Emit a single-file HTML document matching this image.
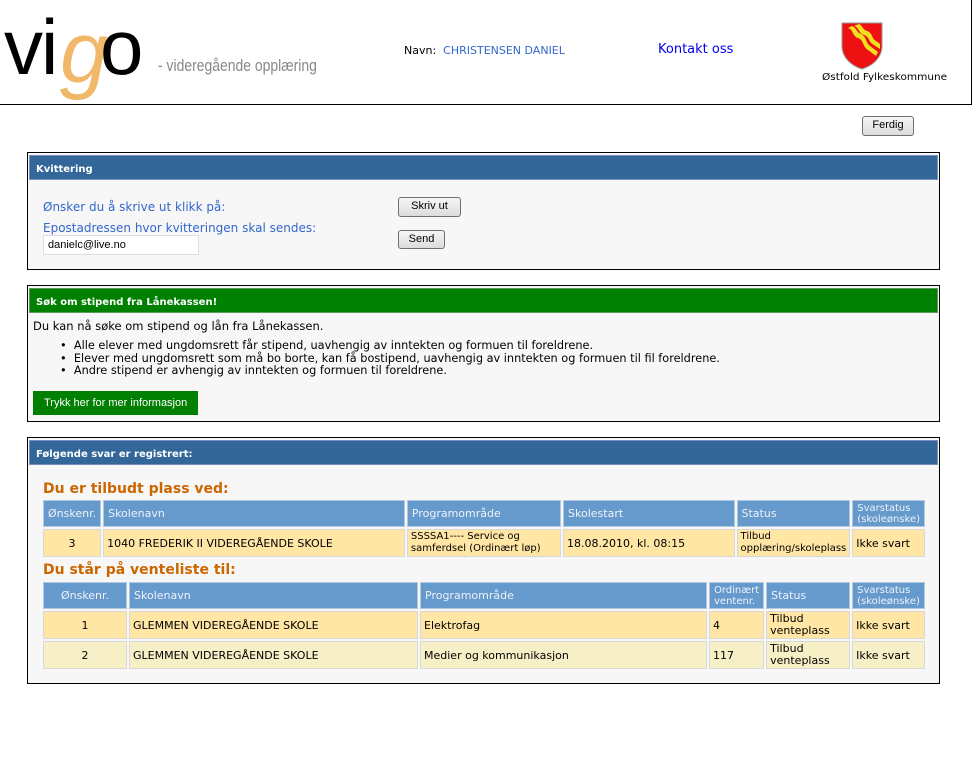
<!DOCTYPE html>
<html><head><meta charset="utf-8">
<style>
*{margin:0;padding:0;box-sizing:border-box}
body{width:978px;height:761px;background:#fff;position:relative;font-family:"DejaVu Sans",Verdana,sans-serif;font-size:11px;color:#000;overflow:hidden}
.a{position:absolute;white-space:nowrap}
.box{position:absolute;border:1px solid #000;background:#f7f7f7}
.bar{position:absolute;left:1px;right:1px;top:2px;height:25px;background:#336699;color:#fff;font-weight:bold;font-size:10px;padding:8px 0 0 6px;border:1px solid #7a8fbf}
.btn{position:absolute;border:1px solid #707070;border-radius:3px;background:linear-gradient(#f6f6f6,#dcdcdc);font-family:"Liberation Sans",Arial,sans-serif;font-size:11px;text-align:center;line-height:17px}
table{position:absolute;border-collapse:separate;border-spacing:2px;font-size:11px}
td{padding:0 3px;border:1px solid #d8d8d8}
th{background:#6699cc;color:#eef3fa;font-weight:normal;text-align:left;padding:0 4px;border:1px solid #b0c8e0}
.r1 td{background:#ffe6a5}
.r2 td{background:#f7efc6}
h3{position:absolute;color:#cc6600;font-size:14px;font-weight:bold}
.sm{font-size:10px;line-height:11px}
</style></head><body>
<div class="a" style="left:0;top:0;width:972px;height:105px;border:1px solid #000;border-top:none;border-left:none"></div>
<div class="a" style="left:4px;top:2px;font-family:'Liberation Sans',sans-serif;font-size:78px;color:#000;letter-spacing:-2px">vi</div>
<div class="a" style="left:60px;top:4px;font-family:'Liberation Sans',sans-serif;font-size:86px;color:#f0b868;font-style:italic">g</div>
<div class="a" style="left:100px;top:2px;font-family:'Liberation Sans',sans-serif;font-size:78px;color:#000">o</div>
<div class="a" style="left:158px;top:56px;font-family:'Liberation Sans',sans-serif;font-size:17px;color:#888;transform:scaleX(0.82);transform-origin:left">- videregående opplæring</div>
<div class="a" style="left:404px;top:44px;font-size:11px">Navn:&nbsp; <span style="color:#3366cc">CHRISTENSEN DANIEL</span></div>
<div class="a" style="left:658px;top:42px;font-size:13px;color:#0000ee">Kontakt oss</div>
<svg class="a" style="left:840px;top:22px" width="44" height="48" viewBox="0 0 44 48"><path d="M2 1H42V24C42 36 32 44 22 47C12 44 2 36 2 24Z" fill="#ee1111" stroke="#999" stroke-width="1"/><path d="M8 6C14 8 12 14 18 16C24 18 22 24 28 28L36 34L38 30L30 24C25 20 27 15 21 12C16 10 17 6 12 4Z M14 4C20 6 18 11 24 13C30 15 28 20 34 23L40 27V22L36 19C31 16 33 11 27 9C22 7 23 4 19 2Z" fill="#f0e020"/></svg>
<div class="a" style="left:822px;top:72px;font-size:10px;transform:scaleX(1.05);transform-origin:left">Østfold Fylkeskommune</div>
<div class="btn" style="left:862px;top:116px;width:52px;height:20px">Ferdig</div>

<div class="box" style="left:27px;top:152px;width:913px;height:118px">
<div class="bar">Kvittering</div>
<div class="a" style="left:15px;top:47px;color:#3366cc;font-size:12px">Ønsker du å skrive ut klikk på:</div>
<div class="a" style="left:15px;top:68px;color:#3366cc;font-size:12px">Epostadressen hvor kvitteringen skal sendes:</div>
<div class="a" style="left:15px;top:82px;width:156px;height:20px;background:#fff;border:1px solid #ddd;font-family:'Liberation Sans',sans-serif;font-size:11px;padding:3px 0 0 4px">danielc@live.no</div>
<div class="btn" style="left:370px;top:44px;width:63px;height:20px">Skriv ut</div>
<div class="btn" style="left:370px;top:77px;width:47px;height:19px">Send</div>
</div>

<div class="box" style="left:27px;top:285px;width:913px;height:137px">
<div class="bar" style="background:#008000;border-color:#5a9a5a">Søk om stipend fra Lånekassen!</div>
<div class="a" style="left:5px;top:33px;font-size:11.5px">Du kan nå søke om stipend og lån fra Lånekassen.</div>
<div class="a" style="left:32px;top:54px;line-height:12.5px;font-size:11.3px">•&nbsp; Alle elever med ungdomsrett får stipend, uavhengig av inntekten og formuen til foreldrene.<br>•&nbsp; Elever med ungdomsrett som må bo borte, kan få bostipend, uavhengig av inntekten og formuen til fil foreldrene.<br>•&nbsp; Andre stipend er avhengig av inntekten og formuen til foreldrene.</div>
<div class="a" style="left:5px;top:105px;width:165px;height:24px;background:#008000;color:#fff;font-family:'Liberation Sans',sans-serif;font-size:11px;padding:6px 0 0 11px">Trykk her for mer informasjon</div>
</div>

<div class="box" style="left:27px;top:437px;width:913px;height:247px">
<div class="bar">Følgende svar er registrert:</div>
<h3 style="left:15px;top:43px">Du er tilbudt plass ved:</h3>
<table style="left:13px;top:60px;width:886px">
<tr style="height:27px"><th style="width:54px">Ønskenr.</th><th style="width:305px">Skolenavn</th><th style="width:155px">Programområde</th><th style="width:173px">Skolestart</th><th style="width:111px">Status</th><th class="sm">Svarstatus (skoleønske)</th></tr>
<tr class="r1" style="height:28px"><td style="text-align:center">3</td><td>1040 FREDERIK II VIDEREGÅENDE SKOLE</td><td class="sm" style="line-height:12px">SSSSA1---- Service og samferdsel (Ordinært løp)</td><td>18.08.2010, kl. 08:15</td><td class="sm" style="line-height:12px">Tilbud opplæring/skoleplass</td><td>Ikke svart</td></tr>
</table>
<h3 style="left:15px;top:124px">Du står på venteliste til:</h3>
<table style="left:13px;top:142px;width:886px">
<tr style="height:27px"><th style="width:84px;text-align:center">Ønskenr.</th><th style="width:289px">Skolenavn</th><th style="width:287px">Programområde</th><th class="sm" style="width:54px">Ordinært ventenr.</th><th style="width:84px">Status</th><th class="sm">Svarstatus (skoleønske)</th></tr>
<tr class="r1" style="height:28px"><td style="text-align:center">1</td><td>GLEMMEN VIDEREGÅENDE SKOLE</td><td>Elektrofag</td><td>4</td><td style="line-height:12px">Tilbud venteplass</td><td>Ikke svart</td></tr>
<tr class="r2" style="height:28px"><td style="text-align:center">2</td><td>GLEMMEN VIDEREGÅENDE SKOLE</td><td>Medier og kommunikasjon</td><td>117</td><td style="line-height:12px">Tilbud venteplass</td><td>Ikke svart</td></tr>
</table>
</div>
</body></html>
